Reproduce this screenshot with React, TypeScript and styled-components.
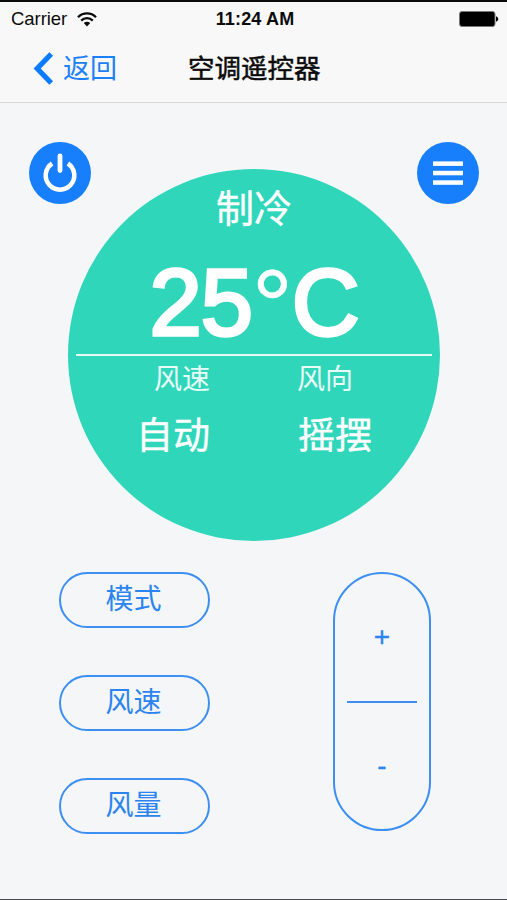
import React from 'react';
import styled, { createGlobalStyle } from 'styled-components';

const GlobalStyle = createGlobalStyle`
  * { box-sizing: border-box; }
  body { margin: 0; background: #f4f6f8; }
  button { font: inherit; color: inherit; background: none; border: 0; padding: 0; }
`;

const Screen = styled.div`
  width: 507px;
  height: 900px;
  overflow: hidden;
  display: flex;
  flex-direction: column;
  background: #f4f6f8;
  border-top: 2px solid #0c0a0b;
  border-bottom: 1px solid #48484c;
  font-family: 'Liberation Sans', 'Noto Sans CJK SC', sans-serif;
`;

const StatusBar = styled.header`
  height: 34px;
  flex: none;
  display: grid;
  grid-template-columns: 1fr auto 1fr;
  align-items: center;
  padding: 0 8px 2px 11px;
  background: #f8f8f8;
  color: #0b0b0b;
  line-height: 34px;
`;

const Carrier = styled.div`
  display: flex;
  align-items: center;
  gap: 10px;
  font-size: 18.5px;
  letter-spacing: -0.05px;
`;

const Clock = styled.time`
  font-size: 18px;
  font-weight: 700;
  letter-spacing: 0.15px;
`;

const BatterySlot = styled.div`
  display: flex;
  justify-content: flex-end;
`;

const NavBar = styled.nav`
  height: 67px;
  flex: none;
  display: flex;
  align-items: center;
  padding-left: 33px;
  background: #f8f8f8;
  border-bottom: 1px solid #d6d8d9;
`;

const BackButton = styled.button`
  display: flex;
  align-items: center;
  gap: 9px;
  width: 155px;
  color: #1b80fa;
  font-size: 27px;
  line-height: 40px;
`;

const Title = styled.h1`
  margin: 0;
  color: #0b0b0b;
  font-size: 26.5px;
  font-weight: 400;
  line-height: 40px;
  -webkit-text-stroke: 0.5px currentColor;
`;

const Actions = styled.div`
  display: flex;
  justify-content: space-between;
  padding: 39px 28px 0 29px;
`;

const RoundButton = styled.button`
  width: 62px;
  height: 62px;
  border-radius: 50%;
  background: #177ffc;
  display: grid;
  place-items: center;
`;

const Dial = styled.section`
  width: 372px;
  height: 372px;
  flex: none;
  margin: -35px 0 0 68px;
  border-radius: 50%;
  background: #30d6ba;
  color: #fff;
  display: flex;
  flex-direction: column;
  align-items: center;
`;

const Mode = styled.div`
  margin-top: 14px;
  height: 52px;
  font-size: 38px;
  line-height: 52px;
  -webkit-text-stroke: 0.4px currentColor;
`;

const Temperature = styled.div`
  display: flex;
  height: 119px;
  font-size: 94px;
  line-height: 136px;
  letter-spacing: -1px;
  -webkit-text-stroke: 3.4px currentColor;
`;

const Degree = styled.span`
  font-size: 102px;
  line-height: 142px;
  -webkit-text-stroke-width: 0.6px;
`;

const DialRule = styled.hr`
  width: 356px;
  height: 2px;
  margin: 0;
  border: 0;
  background: #e6fbf5;
`;

const Readings = styled.div`
  width: 100%;
  display: flex;
  padding-top: 2px;
`;

const Reading = styled.dl<{ $start: number }>`
  margin: 0 0 0 ${(p) => p.$start}px;
  width: 76px;
`;

const ReadingLabel = styled.dt<{ $indent: number }>`
  margin-left: ${(p) => p.$indent}px;
  font-size: 28px;
  line-height: 44px;
  color: #e8fcf8;
`;

const ReadingValue = styled.dd`
  margin: 7px 0 0;
  font-size: 37px;
  line-height: 56px;
  -webkit-text-stroke: 0.4px currentColor;
`;

const Controls = styled.div`
  display: flex;
  justify-content: space-between;
  padding: 31px 76px 0 59px;
`;

const ModeButtons = styled.div`
  display: flex;
  flex-direction: column;
  gap: 47px;
`;

const PillButton = styled.button`
  width: 151px;
  height: 56px;
  border: 2px solid #3d8ff2;
  border-radius: 28px;
  color: #2b84ef;
  font-size: 28px;
  line-height: 50px;
  padding-right: 2px;
`;

const Stepper = styled.div`
  width: 98px;
  height: 259px;
  border: 2px solid #3d8ff2;
  border-radius: 49px;
  display: flex;
  flex-direction: column;
  align-items: center;
  color: #2b84ef;
`;

const StepButton = styled.button`
  flex: 1;
  width: 100%;
  font-size: 28px;
  line-height: 30px;
  -webkit-text-stroke: 0.3px currentColor;
`;

const StepRule = styled.hr`
  width: 70px;
  height: 2px;
  margin: 0;
  border: 0;
  background: #3d8ff2;
`;

const WifiIcon = () => (
  <svg width="20" height="15" viewBox="0 0 20 15" fill="none" stroke="#0b0b0b" strokeWidth="2.3">
    <path d="M1 5.2C6 .2 14 .2 19 5.2" />
    <path d="M4.2 8.6C7.5 5.4 12.5 5.4 15.8 8.6" />
    <path d="M10 14.4 6.8 11.1c1.8-1.7 4.6-1.7 6.4 0Z" fill="#0b0b0b" stroke="none" />
  </svg>
);

const BatteryIcon = () => (
  <svg width="40" height="16" viewBox="0 0 40 16">
    <rect x=".5" y=".5" width="35.5" height="15" rx="2.5" fill="#000" stroke="#777" />
    <path d="M37 5.2c3 1 3 4.6 0 5.6Z" fill="#000" />
  </svg>
);

const ChevronIcon = () => (
  <svg width="21" height="34" viewBox="0 0 21 34" fill="none" stroke="#0b7bff" strokeWidth="5.2">
    <path d="M18.2 2 4.2 16.500l14 14.500" />
  </svg>
);

const PowerIcon = () => (
  <svg width="36" height="42" viewBox="0 0 36 42" fill="none" stroke="#fff" strokeWidth="4.5">
    <path d="M10.1 11.500a14.300 14.300 0 1 0 15.800 0" />
    <path d="M18 3.800V18.500" strokeWidth="4.800" strokeLinecap="round" />
  </svg>
);

const MenuIcon = () => (
  <svg width="30" height="24" viewBox="0 0 30 24" fill="#fff">
    <rect y=".4" width="30" height="4.500" />
    <rect y="9.800" width="30" height="4.500" />
    <rect y="19.300" width="30" height="4.500" />
  </svg>
);

export default function App() {
  return (
    <>
      <GlobalStyle />
      <Screen>
        <StatusBar>
          <Carrier>
            Carrier
            <WifiIcon />
          </Carrier>
          <Clock>11:24 AM</Clock>
          <BatterySlot>
            <BatteryIcon />
          </BatterySlot>
        </StatusBar>
        <NavBar>
          <BackButton>
            <ChevronIcon />
            返回
          </BackButton>
          <Title>空调遥控器</Title>
        </NavBar>
        <Actions>
          <RoundButton aria-label="电源">
            <PowerIcon />
          </RoundButton>
          <RoundButton aria-label="菜单">
            <MenuIcon />
          </RoundButton>
        </Actions>
        <Dial>
          <Mode>制冷</Mode>
          <Temperature>
            25<Degree>°</Degree>C
          </Temperature>
          <DialRule />
          <Readings>
            <Reading $start={68}>
              <ReadingLabel $indent={18}>风速</ReadingLabel>
              <ReadingValue>自动</ReadingValue>
            </Reading>
            <Reading $start={86}>
              <ReadingLabel $indent={-1}>风向</ReadingLabel>
              <ReadingValue>摇摆</ReadingValue>
            </Reading>
          </Readings>
        </Dial>
        <Controls>
          <ModeButtons>
            <PillButton>模式</PillButton>
            <PillButton>风速</PillButton>
            <PillButton>风量</PillButton>
          </ModeButtons>
          <Stepper>
            <StepButton>+</StepButton>
            <StepRule />
            <StepButton>-</StepButton>
          </Stepper>
        </Controls>
      </Screen>
    </>
  );
}
